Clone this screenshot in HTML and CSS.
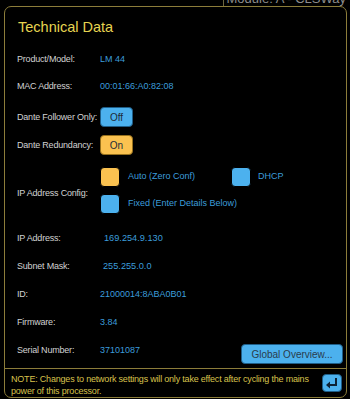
FILE: index.html
```html
<!DOCTYPE html>
<html>
<head>
<meta charset="utf-8">
<link rel="stylesheet" href="styles.css">
</head>
<body>
<div class="topstrip">
  <div class="module"><span>Module: A - CLSWay</span></div>
</div>
<div class="panel">
  <div class="title">Technical Data</div>
  <div class="rows">
    <div class="row r1"><span class="label">Product/Model:</span><span class="value">LM 44</span></div>
    <div class="row r2"><span class="label">MAC Address:</span><span class="value">00:01:66:A0:82:08</span></div>
    <div class="row r3"><span class="label">Dante Follower Only:</span><span class="btn blue toggle">Off</span></div>
    <div class="row r4"><span class="label">Dante Redundancy:</span><span class="btn orange toggle">On</span></div>
    <div class="row config">
      <span class="label">IP Address Config:</span>
      <div class="opts">
        <div class="optline">
          <span class="opt"><span class="box orange"></span><span class="value">Auto (Zero Conf)</span></span>
          <span class="opt dhcp"><span class="box blue"></span><span class="value">DHCP</span></span>
        </div>
        <div class="optline">
          <span class="opt wide"><span class="box blue"></span><span class="value">Fixed (Enter Details Below)</span></span>
        </div>
      </div>
    </div>
    <div class="row"><span class="label">IP Address:</span><span class="value big ind4">169.254.9.130</span></div>
    <div class="row"><span class="label">Subnet Mask:</span><span class="value big ind3">255.255.0.0</span></div>
    <div class="row"><span class="label">ID:</span><span class="value">21000014:8ABA0B01</span></div>
    <div class="row"><span class="label">Firmware:</span><span class="value">3.84</span></div>
    <div class="row serial"><span class="label">Serial Number:</span><span class="value">37101087</span><span class="btn blue global">Global Overview...</span></div>
  </div>
  <div class="footer">
    <div class="note">NOTE: Changes to network settings will only take effect after cycling the mains power of this processor.</div>
    <span class="btn blue enter">
      <svg width="14" height="12" viewBox="0 0 14 12"><path d="M11 1 V8 H3" fill="none" stroke="#0d2236" stroke-width="2"/><path d="M1 8 L5 4.5 V11.5 Z" fill="#0d2236"/></svg>
    </span>
  </div>
</div>
</body>
</html>
```
FILE: styles.css
```css
* { box-sizing: border-box; }
html, body { margin: 0; padding: 0; background: #000; }
body {
  width: 350px;
  height: 399px;
  overflow: hidden;
  font-family: "Liberation Sans", Arial, sans-serif;
}
.topstrip {
  height: 6px;
}
.module {
  display: flex;
  justify-content: flex-end;
  height: 6px;
  overflow: hidden;
}
.module span {
  margin-top: -9px;
  margin-right: 4px;
  padding-left: 3px;
  border-left: 1px solid #6b6540;
  color: #8d8d8d;
  font-size: 13px;
  line-height: 15px;
  height: 15px;
}
.panel {
  margin-left: 4px;
  width: 343px;
  height: 392px;
  border: 1.5px solid #8c7d3a;
  border-radius: 7px;
  display: flex;
  flex-direction: column;
}
.title {
  color: #e6d451;
  font-size: 14.5px;
  line-height: 16px;
  padding: 12px 0 0 13px;
  height: 38px;
}
.rows {
  flex: 1;
  display: flex;
  flex-direction: column;
  padding-left: 12px;
}
.row {
  height: 28px;
  display: flex;
  align-items: center;
}
.r1 { height: 27px; }
.r2 { height: 27px; margin-bottom: 4px; }
.label {
  width: 83px;
  flex: none;
  color: #d2d2d2;
  font-size: 9px;
  letter-spacing: -0.2px;
}
.value {
  color: #3c9ddb;
  font-size: 9px;
}
.value.big { font-size: 9.2px; }
.ind4 { margin-left: 4px; }
.ind3 { margin-left: 3px; }
.btn {
  display: flex;
  align-items: center;
  justify-content: center;
  border-radius: 4px;
  border: 1.5px solid;
  box-shadow: 0 0 0 1px #000;
  color: #1d2b38;
  font-size: 10px;
}
.blue { background: #4cb1ee; border-color: #1f5e88; }
.orange { background: #fbc250; border-color: #96701c; }
.toggle { width: 33px; height: 20px; }
.config {
  height: 65px;
  align-items: center;
}
.config .label { margin-top: 2px; }
.opts {
  display: flex;
  flex-direction: column;
  gap: 7px;
  margin-top: -2px;
}
.optline { display: flex; }
.opt {
  display: flex;
  align-items: center;
  gap: 8px;
  width: 131px;
}
.opt.wide { width: auto; }
.opt.dhcp { gap: 7px; }
.opt .value { margin-top: -2px; white-space: nowrap; }
.box {
  width: 20px;
  height: 20px;
  border-radius: 4px;
  border: 1.5px solid;
  flex: none;
}
.global {
  margin-left: auto;
  margin-right: 3px;
  align-self: flex-end;
  width: 102px;
  height: 20px;
  color: #2a3c4c;
}
.footer {
  height: 29px;
  margin-top: 4px;
  border-top: 1.5px solid #8c7d3a;
  display: flex;
  align-items: flex-start;
  padding: 4px 4px 0 6px;
}
.note {
  flex: 1;
  color: #d8c24c;
  font-size: 9px;
  line-height: 12px;
  letter-spacing: -0.2px;
}
.enter {
  width: 20px;
  height: 18px;
  flex: none;
  margin-left: 4px;
  margin-top: 1px;
}
```
